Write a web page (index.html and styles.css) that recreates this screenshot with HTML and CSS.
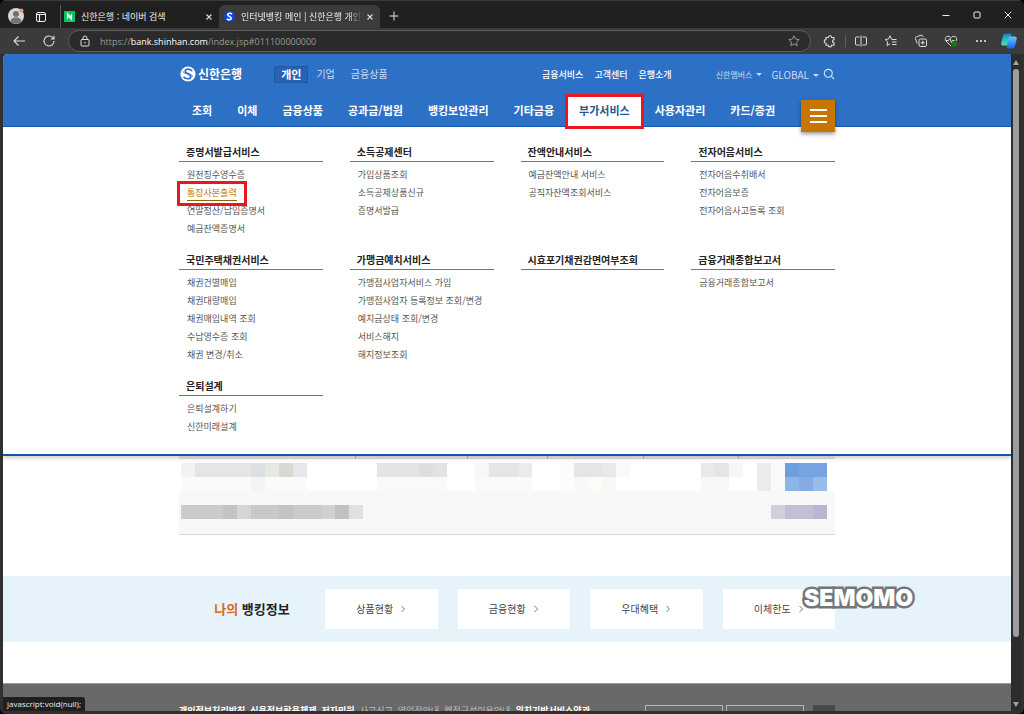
FILE: index.html
```html
<!DOCTYPE html>
<html lang="ko">
<head>
<meta charset="utf-8">
<title>인터넷뱅킹 메인 | 신한은행 개인뱅킹</title>
<link rel="stylesheet" href="styles.css">
</head>
<body>
<div class="window">
  <div class="titlebar">
    <svg class="avatar" viewBox="0 0 16 16"><circle cx="8" cy="8" r="8" fill="#d8d5d3"/><circle cx="8" cy="6" r="3" fill="#77716e"/><path d="M2.500 13.500C3 10 6 9.600 8 9.600s5 .4 5.500 3.900A8 8 0 0 1 2.500 13.500z" fill="#77716e"/><circle cx="13.500" cy="2.500" r="2" fill="#f28b82"/></svg>
    <svg class="workspaces" viewBox="0 0 12 12" fill="none" stroke="#f0f0f0"><rect x="1.500" y="1.500" width="9" height="9" rx="1.500"/><path d="M1.500 3.500h9M4.500 3.500v7" stroke-width="1.200"/></svg>
    <div class="tab">
      <svg class="favicon" viewBox="0 0 12 12"><rect width="12" height="12" fill="#03c75a"/><path d="M4 8.500v-5L8 8.500v-5" stroke="#fff" stroke-width="1.700" fill="none"/></svg>
      <span class="tab-title">신한은행 : 네이버 검색</span>
      <button class="tab-close" aria-label="탭 닫기"><svg viewBox="0 0 8 8" stroke="#ddd" stroke-width="1.100"><path d="M1.500 1.500l5 5M6.500 1.500l-5 5"/></svg></button>
    </div>
    <div class="tab tab-active">
      <svg class="favicon" viewBox="0 0 12 12"><circle cx="6" cy="6" r="5.800" fill="#0d47e0"/><path d="M8.700 3.600C7.500 2 4 2.200 4 4.100c0 2 4 1.700 4 3.900 0 2-3.500 2.200-4.800.5" stroke="#fff" stroke-width="1.700" fill="none"/></svg>
      <span class="tab-title tab-fade">인터넷뱅킹 메인 | 신한은행 개인뱅</span>
      <button class="tab-close" aria-label="탭 닫기"><svg viewBox="0 0 8 8" stroke="#ddd" stroke-width="1.100"><path d="M1.500 1.500l5 5M6.500 1.500l-5 5"/></svg></button>
    </div>
    <button class="new-tab" aria-label="새 탭"><svg viewBox="0 0 10 10" stroke="#ddd"><path d="M5 .5v9M.5 5h9"/></svg></button>
    <div class="win-controls">
      <button aria-label="최소화"><svg viewBox="0 0 8 8" stroke="#eee"><path d="M.5 4.500h7"/></svg></button>
      <button aria-label="최대화"><svg viewBox="0 0 8 8" stroke="#eee" fill="none"><rect x="1" y="1" width="6" height="6" rx="1"/></svg></button>
      <button aria-label="닫기"><svg viewBox="0 0 8 8" stroke="#eee"><path d="M.7.700l6.600 6.600M7.300.700L.7 7.300"/></svg></button>
    </div>
  </div>

  <div class="toolbar">
    <button class="tool" aria-label="뒤로"><svg viewBox="0 0 14 14" fill="none" stroke="#ddd" stroke-width="1.100"><path d="M13 7H2M6.500 2.500L2 7l4.500 4.500"/></svg></button>
    <button class="tool tool-reload" aria-label="새로 고침"><svg viewBox="0 0 14 14" fill="none" stroke="#ddd" stroke-width="1.100"><path d="M12 7a5 5 0 1 1-1.500-3.600L12 5M12 1.800V5H8.800"/></svg></button>
    <div class="address">
      <svg class="lock" viewBox="0 0 12 12" fill="none" stroke="#ddd"><rect x="2" y="4.500" width="8" height="6.500" rx="1"/><path d="M4 4.500V3a2 2 0 0 1 4 0v1.500"/><circle cx="6" cy="7.700" r=".4"/></svg>
      <span class="url">https://<b>bank.shinhan.com</b>/index.jsp#011100000000</span>
      <svg class="lock" viewBox="0 0 12 12" fill="none" stroke="#999"><path d="M6 .9l1.600 3.200 3.500.5-2.500 2.500.6 3.500L6 8.900l-3.200 1.700.6-3.500L.9 4.600l3.500-.5z"/></svg>
    </div>
    <div class="tools">
      <svg viewBox="0 0 14 14" fill="none" stroke="#ddd" stroke-width="1.100"><path d="M3 3.500h2.300a1.700 1.700 0 0 1 3.400 0H11v2.200a1.500 1.500 0 1 0 0 3v2.600H8.700a1.700 1.700 0 0 1-3.400 0H3V9.200a1.800 1.800 0 0 1 0-3.600z"/></svg>
      <span class="tool-sep"></span>
      <svg viewBox="0 0 14 14" fill="none" stroke="#ddd"><path d="M5.500 3H2.500a1 1 0 0 0-1 1v6a1 1 0 0 0 1 1h3M8.500 3h3a1 1 0 0 1 1 1v6a1 1 0 0 1-1 1h-3M7 1.500v11"/></svg>
      <svg viewBox="0 0 14 14" fill="none" stroke="#ddd"><path d="M7.500 5L6 1.800 4.500 5l-3.300.5 2.400 2.400L3 11.500l3-1.800M7.500 5.500h5M8 8h4.500M8 10.500h4.500"/></svg>
      <svg viewBox="0 0 14 14" fill="none" stroke="#ddd"><rect x="5" y="5" width="7.500" height="7.500" rx="1.500"/><path d="M8.750 6.700v4M6.700 8.750h4M3.200 9.500L1.500 4.500a1.500 1.500 0 0 1 1-1.800L7 1.300a1.500 1.500 0 0 1 1.800.9l.4 1"/></svg>
      <svg viewBox="0 0 14 14" fill="none" stroke="#ddd"><path d="M7 12L2 7C.3 4.500 2 2.300 4 2.300c1.500 0 2.500.8 3 1.500.5-.7 1.500-1.500 3-1.500 2 0 3.700 2.200 2 4.700M2 6.500h2.500L6 4.500l1.500 4 1-2h2"/><circle cx="10.500" cy="10" r="2.800" fill="#107c10" stroke="none"/></svg>
      <svg viewBox="0 0 14 14" fill="#eee"><circle cx="3" cy="7" r="1"/><circle cx="7" cy="7" r="1"/><circle cx="11" cy="7" r="1"/></svg>
      <svg class="copilot" viewBox="0 0 16 16"><defs><linearGradient id="cpa" x2="0" y2="1"><stop stop-color="#1c7ad4"/><stop offset=".5" stop-color="#20c4c0"/><stop offset="1" stop-color="#56dfa0"/></linearGradient><linearGradient id="cpb" x2="0" y2="1"><stop stop-color="#63c8ff"/><stop offset="1" stop-color="#1664e8"/></linearGradient></defs><path d="M4.500 .5H9c1.200 0 1.500.8 1.300 1.600L8.500 10.300C8 12 7.200 12.500 6 12.500H2C.3 12.500-.1 11 .4 9.500l1.700-7C2.500 1.200 3.300 .5 4.500 .5z" fill="url(#cpa)"/><path d="M11.500 15.500H7c-1.200 0-1.500-.8-1.300-1.600l1.800-8.200C8 4 8.800 3.500 10 3.500h4c1.700 0 2.100 1.500 1.600 3L13.900 13.500c-.4 1.300-1.200 2-2.400 2z" fill="url(#cpb)"/></svg>
    </div>
  </div>

  <div class="viewport">
    <div class="page">
      <header class="header">
        <div class="wrap top-row">
          <a class="logo" href="#"><svg viewBox="0 0 16 16"><circle cx="8" cy="8" r="7.600" fill="#fff"/><path d="M12 5.200C11 2.700 5.500 2.300 5.200 5.200 5 7.700 10.900 7.600 10.800 10.600c-.1 2.800-5.300 2.800-7.300.2" stroke="#2d71c6" stroke-width="1.700" fill="none"/><path d="M6.500 8c-2-.6-3.500-1.600-3.600-3M9.500 8c2 .8 3.300 1.700 3.400 3" stroke="#2d71c6" stroke-width=".8" fill="none"/></svg>신한은행</a>
          <nav class="segments"><a class="segment-on" href="#">개인</a><a href="#">기업</a><a href="#">금융상품</a></nav>
          <nav class="support"><a href="#">금융서비스</a><a href="#">고객센터</a><a href="#">은행소개</a></nav>
          <div class="utils">
            <button class="members">신한멤버스<span class="caret"></span></button>
            <button class="global">GLOBAL<span class="caret"></span></button>
            <button class="search" aria-label="검색"><svg viewBox="0 0 12 12" fill="none" stroke="#c9dcf3" stroke-width="1.200"><circle cx="5.300" cy="5.300" r="4"/><path d="M8.300 8.300L11 11"/></svg></button>
          </div>
        </div>
        <div class="wrap nav-row">
          <nav class="main-nav">
            <a href="#">조회</a><a href="#">이체</a><a href="#">금융상품</a><a href="#">공과금/법원</a><a href="#">뱅킹보안관리</a><a href="#">기타금융</a><a class="nav-on" href="#">부가서비스</a><a href="#">사용자관리</a><a href="#">카드/증권</a>
          </nav>
          <button class="all-menu" aria-label="전체메뉴"><span></span><span></span><span></span></button>
        </div>
      </header>

      <div class="mega">
        <div class="wrap mega-grid">
          <section><h2>증명서발급서비스</h2><ul><li><a href="#">원천징수영수증</a></li><li><a class="marked" href="#"><span>통장사본출력</span></a></li><li><a href="#">연말정산/납입증명서</a></li><li><a href="#">예금잔액증명서</a></li></ul></section>
          <section><h2>소득공제센터</h2><ul><li><a href="#">가입상품조회</a></li><li><a href="#">소득공제상품신규</a></li><li><a href="#">증명서발급</a></li></ul></section>
          <section><h2>잔액안내서비스</h2><ul><li><a href="#">예금잔액안내 서비스</a></li><li><a href="#">공직자잔액조회서비스</a></li></ul></section>
          <section><h2>전자어음서비스</h2><ul><li><a href="#">전자어음수취배서</a></li><li><a href="#">전자어음보증</a></li><li><a href="#">전자어음사고등록 조회</a></li></ul></section>
          <section><h2>국민주택채권서비스</h2><ul><li><a href="#">채권건별매입</a></li><li><a href="#">채권대량매입</a></li><li><a href="#">채권매입내역 조회</a></li><li><a href="#">수납영수증 조회</a></li><li><a href="#">채권 변경/취소</a></li></ul></section>
          <section><h2>가맹금예치서비스</h2><ul><li><a href="#">가맹점사업자서비스 가입</a></li><li><a href="#">가맹점사업자 등록정보 조회/변경</a></li><li><a href="#">예치금상태 조회/변경</a></li><li><a href="#">서비스해지</a></li><li><a href="#">해지정보조회</a></li></ul></section>
          <section><h2>시효포기채권감면여부조회</h2></section>
          <section><h2>금융거래종합보고서</h2><ul><li><a href="#">금융거래종합보고서</a></li></ul></section>
          <section><h2>은퇴설계</h2><ul><li><a href="#">은퇴설계하기</a></li><li><a href="#">신한미래설계</a></li></ul></section>
        </div>
      </div>

      <div class="wrap accounts">
        <svg viewBox="0 0 656 80" shape-rendering="crispEdges" aria-label="계좌 목록">
          <path fill="#ececec" d="M0 0h656v2H0z"/><path fill="#dfdde2" d="M0 2h656v1H0z"/><path fill="#b9b9bd" d="M176 0h1v3h-1zM288 0h1v3h-1zM368 0h1v3h-1zM464 0h1v3h-1zM559 0h1v3h-1z"/>
          <path fill="#f8f8f8" d="M0 35h656v43H0z"/><path fill="#d6d6dd" d="M0 78h656v1H0z"/>
          <path fill="#f1f2f2" d="M2 7h14v14H2z"/><path fill="#e5e5e5" d="M16 7h56v14H16z"/><path fill="#dde0e3" d="M72 7h14v14H72z"/><path fill="#e8e8e5" d="M86 7h14v14H86z"/><path fill="#dad8d4" d="M100 7h14v14h-14z"/><path fill="#e5e8ea" d="M114 7h14v14h-14z"/>
          <path fill="#fafafa" d="M2 21h126v14H2z"/><path fill="#f3f4f5" d="M72 21h14v14H72z"/>
          <path fill="#e4e4e4" d="M198 7h42v14h-42z"/><path fill="#dedede" d="M240 7h14v14h-14z"/><path fill="#e3e3e3" d="M254 7h14v14h-14z"/><path fill="#f9f9f9" d="M198 21h70v14h-70z"/>
          <path fill="#f7f7f7" d="M296 7h14v14h-14z"/><path fill="#e5e5e5" d="M310 7h29v14h-29z"/><path fill="#ebebeb" d="M339 7h14v14h-14z"/><path fill="#fafafa" d="M296 21h57v14h-57z"/>
          <path fill="#fcfcfb" d="M381 7h14v28h-14z"/><path fill="#e5e5e5" d="M395 7h28v14h-28z"/><path fill="#e9e9e9" d="M423 7h14v14h-14z"/><path fill="#f8faf9" d="M437 7h14v14h-14z"/><path fill="#f8f8f8" d="M395 21h42v14h-42z"/><path fill="#fcfbf6" d="M409 21h14v14h-14z"/>
          <path fill="#e9e9e9" d="M522 7h14v14h-14z"/><path fill="#e5e5e5" d="M536 7h14v14h-14z"/><path fill="#f7f7f7" d="M550 7h14v14h-14zM522 21h28v14h-28z"/><path fill="#ebebeb" d="M578 7h14v28h-14z"/><path fill="#f8fafa" d="M592 7h14v28h-14z"/>
          <path fill="#6e9de0" d="M606 7h14v14h-14z"/><path fill="#76a4e3" d="M620 7h28v14h-28z"/><path fill="#8db3e8" d="M606 21h14v14h-14z"/><path fill="#84abe4" d="M620 21h14v14h-14z"/><path fill="#99bbea" d="M634 21h14v14h-14z"/>
          <path fill="#cbcbcb" d="M2 49h42v14H2z"/><path fill="#c4c4c4" d="M44 49h14v14H44z"/><path fill="#d5d5d5" d="M58 49h14v14H58z"/><path fill="#c9c9c9" d="M72 49h28v14H72z"/><path fill="#c5c3c2" d="M100 49h14v14h-14z"/><path fill="#c9cbcb" d="M114 49h28v14h-28z"/><path fill="#d0d0d0" d="M142 49h14v14h-14z"/><path fill="#c4c1bf" d="M156 49h14v14h-14z"/><path fill="#dee1e1" d="M170 49h14v14h-14z"/>
          <path fill="#cfcfdf" d="M592 49h14v14h-14z"/><path fill="#c1c1d6" d="M606 49h28v14h-28z"/><path fill="#b7b7d1" d="M634 49h14v14h-14z"/>
        </svg>
      </div>

      <section class="my-info">
        <div class="wrap info-row">
          <h2><em>나의</em> 뱅킹정보</h2>
          <div class="cards">
            <a href="#">상품현황<svg viewBox="0 0 6 8"><path d="M1.500 1L4.500 4l-3 3"/></svg></a>
            <a href="#">금융현황<svg viewBox="0 0 6 8"><path d="M1.500 1L4.500 4l-3 3"/></svg></a>
            <a href="#">우대혜택<svg viewBox="0 0 6 8"><path d="M1.500 1L4.500 4l-3 3"/></svg></a>
            <a href="#">이체한도<svg viewBox="0 0 6 8"><path d="M1.500 1L4.500 4l-3 3"/></svg></a>
          </div>
          <span class="watermark">SEMOMO</span>
        </div>
      </section>

      <footer class="footer">
        <div class="wrap footer-row">
          <nav class="policies"><a class="strong" href="#">개인정보처리방침</a><a class="strong" href="#">신용정보활용체제</a><a class="strong" href="#">전자민원</a><a href="#">사고신고</a><a href="#">영업점안내</a><a href="#">웹접근성이용안내</a><a class="strong" href="#">위치기반서비스약관</a></nav>
          <div class="sites"><button aria-label="관련 사이트"></button><button aria-label="패밀리 사이트"></button><button class="go-top" aria-label="맨 위로"></button></div>
        </div>
      </footer>
      <div class="status">javascript:void(null);</div>
    </div>
    <div class="scrollbar"><span class="arrow-up"></span><span class="thumb"></span><span class="arrow-down"></span></div>
  </div>
</div>
</body>
</html>
```
FILE: styles.css
```css
* { box-sizing: border-box; }
body { margin: 0; background: #000; font-family: "Noto Sans CJK KR", sans-serif; font-size: 9px; }
button { margin: 0; padding: 0; border: 0; background: none; color: inherit; font: inherit; }
a { color: inherit; text-decoration: none; }
h2, ul { margin: 0; padding: 0; }
ul { list-style: none; }
svg { display: block; flex: none; }

.window { height: 100vh; display: flex; flex-direction: column; padding: 0 3px 3px; background: #303030; border-radius: 6px; overflow: hidden; }

.titlebar { height: 28px; flex: none; display: flex; align-items: flex-end; margin: 0 -3px; padding-left: 8px; background: #202020; border-top: 1px solid #3a3a3a; }
.avatar { width: 16px; height: 16px; margin-bottom: 4px; }
.workspaces { width: 12px; height: 12px; margin: 0 13px 5px 11px; }
.tab { width: 159px; height: 23px; display: flex; align-items: center; padding: 0 6px 0 3px; border-left: 1px solid #555; color: #eee; font-size: 9px; }
.tab-active { width: 161px; padding-left: 5px; border: 0; border-radius: 6px 6px 0 0; background: #3b3b3b; }
.favicon { width: 11px; height: 11px; margin-right: 6px; }
.tab-title { flex: 1; min-width: 0; overflow: hidden; white-space: nowrap; line-height: 16px; }
.tab-fade { mask-image: linear-gradient(to right, #000 88%, transparent); }
.tab-close svg { width: 8px; height: 8px; }
.tab-close { margin-left: 3px; }
.new-tab { margin: 0 9px 7px; }
.new-tab svg { width: 10px; height: 10px; }
.win-controls { margin-left: auto; display: flex; gap: 23px; padding: 0 12px 9px 0; }
.win-controls svg { width: 8px; height: 8px; }

.toolbar { height: 26px; flex: none; display: flex; align-items: center; margin: 0 -3px; padding: 0 7px 0 12px; background: #3b3b3b; }
.tool svg { width: 14px; height: 14px; }
.tool-reload { margin: 0 12px 0 16px; }
.address { flex: 1; height: 22px; display: flex; align-items: center; padding: 0 10px; border: 1px solid #5c5c5c; border-radius: 11px; background: #2b2b2b; }
.lock { width: 12px; height: 12px; }
.url { flex: 1; margin-left: 9px; font-family: "Open Sans", sans-serif; font-size: 9px; color: #9a9a9a; }
.url b { color: #fff; font-weight: 400; }
.tools { display: flex; align-items: center; gap: 16px; margin-left: 12px; }
.tools svg { width: 14px; height: 14px; }
.tools .copilot { width: 16px; height: 16px; margin-left: -3px; }
.tool-sep { width: 1px; height: 12px; margin: 0 -8px; background: #606060; }

.viewport { flex: 1; min-height: 0; display: flex; border-radius: 5px 0 0 0; overflow: hidden; }
.page { flex: 1; min-width: 0; position: relative; overflow: hidden; background: #fff; }
.wrap { width: 66%; min-width: 656px; max-width: 656px; margin: 0 auto; }

.header { height: 73px; padding-top: 9px; background: #2d71c6; border-bottom: 1px solid #1857b0; color: #fff; position: relative; z-index: 3; }
.top-row { display: flex; align-items: center; height: 22px; }
.logo { display: flex; align-items: center; gap: 2px; padding-left: 1px; font-size: 12px; font-weight: 700; line-height: 20px; }
.logo svg { width: 16px; height: 16px; }
.segments { display: flex; align-items: center; margin-left: 32px; font-size: 10px; line-height: 16px; color: #c9dcf3; }
.segments a { margin-right: 16px; }
.segments .segment-on { margin-right: 8px; padding: 0 6px; border: 1px solid #1f589f; background: #2763b1; color: #fff; font-size: 11px; font-weight: 700; line-height: 15px; }
.support { display: flex; gap: 11px; margin-left: auto; font-weight: 500; }
.utils { display: flex; align-items: center; margin-left: 44px; color: #c9dcf3; }
.caret { display: inline-block; margin-left: 4px; vertical-align: 2px; border: 3px solid transparent; border-top-color: #c9dcf3; border-bottom: 0; }
.members { font-size: 8px; }
.global { margin-left: 9px; font-size: 10px; }
.search { margin-left: 4px; }
.search svg { width: 12px; height: 12px; }
.nav-row { display: flex; height: 41px; }
.main-nav { display: flex; gap: 1px; padding: 10px 0 0 1px; font-size: 11px; font-weight: 700; line-height: 31px; white-space: nowrap; }
.main-nav a { padding: 0 12px; }
.main-nav .nav-on { position: relative; background: #fff; color: #24568f; }
.nav-on::after { content: ""; position: absolute; inset: -1px -2px -3px; border: 3px solid #ec1620; }
.all-menu { width: 34px; height: 32px; margin: 15px 0 0 auto; display: flex; flex-direction: column; align-items: center; justify-content: center; gap: 4px; background: #c77700; box-shadow: 0 2px 4px #0006; }
.all-menu span { width: 17px; height: 2px; background: #fff; }

.mega { position: relative; z-index: 2; padding: 16px 0 18px; background: #fff; border-bottom: 2px solid #1255b0; box-shadow: 0 2px 4px #0003; }
.mega-grid { display: grid; grid-template-columns: repeat(4, 1fr); gap: 13px 27px; }
.mega h2 { padding-left: 7px; border-bottom: 1px solid #4a7fb8; font-size: 10px; font-weight: 700; line-height: 18px; color: #222; white-space: nowrap; }
.mega ul { padding: 4px 0 0 8px; }
.mega li { line-height: 18px; color: #555; white-space: nowrap; }
.marked { position: relative; display: inline-block; color: #c77700; }
.marked span { display: inline-block; line-height: 14px; border-bottom: 1px solid #8a6500; }
.marked::after { content: ""; position: absolute; inset: -3px -10px -4px; border: 3px solid #ec1620; }

.accounts svg { width: 100%; height: auto; }

.my-info { margin-top: 40px; padding: 13px 0; background: #e6f3fb; }
.info-row { position: relative; display: flex; align-items: center; }
.info-row h2 { width: 146px; padding-bottom: 2px; text-align: center; font-size: 13px; font-weight: 700; color: #222; }
.info-row em { color: #db6a1c; font-style: normal; }
.cards { flex: 1; display: grid; grid-template-columns: repeat(4, 1fr); gap: 20px; }
.cards a { height: 40px; display: flex; align-items: center; justify-content: center; gap: 7px; padding-bottom: 1px; background: #fff; color: #444; font-size: 10px; }
.cards svg { width: 6px; height: 8px; fill: none; stroke: #777; }
.watermark { position: absolute; left: 625px; top: -5px; font-family: Inter, sans-serif; font-size: 23px; font-weight: 900; line-height: 28px; color: #fff; -webkit-text-stroke: 5px #74777a; paint-order: stroke fill; stroke-linejoin: round; }

.footer { margin-top: 41px; padding: 20px 0; background: #696969; border-top: 1px solid #9a9a9a; }
.footer-row { display: flex; align-items: flex-start; }
.policies { display: flex; gap: 5px; font-size: 9px; line-height: 13px; color: #bdbdbd; white-space: nowrap; }
.policies .strong { color: #fff; font-weight: 700; }
.sites { display: flex; gap: 3px; margin-left: auto; padding-top: 1px; }
.sites button { width: 78px; height: 20px; border: 1px solid #b5b5b5; }
.sites .go-top { width: 22px; margin-left: 6px; border: 0; background: #484848; }
.status { position: absolute; left: 0; bottom: 0; padding: 0 4px; border-radius: 0 3px 0 0; background: #1f1f1f; color: #eee; font: 8px/14px "Open Sans", sans-serif; }

.scrollbar { width: 10px; display: flex; flex-direction: column; align-items: center; padding: 6px 0 4px; background: #2c2c2c; }
.arrow-up { border: 3px solid transparent; border-top: 0; border-bottom: 5px solid #a0a0a0; }
.arrow-down { border: 3px solid transparent; border-bottom: 0; border-top: 5px solid #a0a0a0; }
.thumb { width: 6px; height: 568px; margin: 4px 0 auto; border-radius: 3px; background: #9d9d9d; }
```
